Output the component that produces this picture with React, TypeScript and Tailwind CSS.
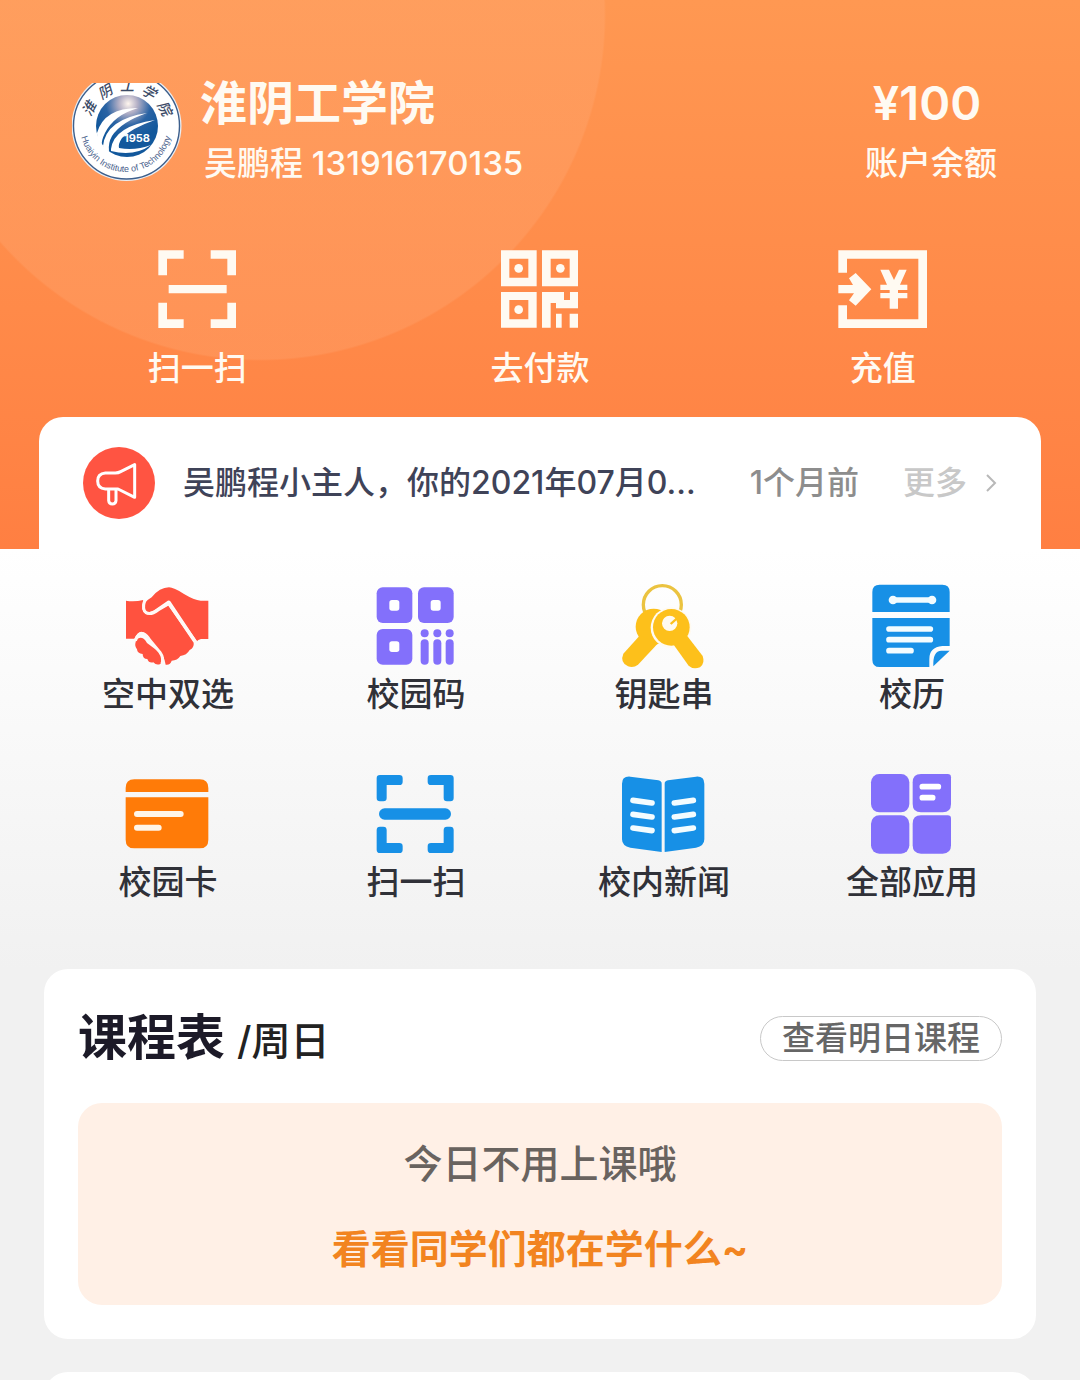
import type { ReactNode } from "react";

function SchoolLogo() {
  return (
    <svg viewBox="0 0 110 98" className="mt-1 h-[98px] w-[110px] shrink-0" role="img" aria-label="Huaiyin Institute of Technology">
      <defs>
        <radialGradient id="globe" cx="0.52" cy="0.14" r="0.6">
          <stop offset="0" stopColor="#fff6ee" />
          <stop offset="0.25" stopColor="#b4b0c6" />
          <stop offset="0.6" stopColor="#2a63a4" />
          <stop offset="1" stopColor="#12589c" />
        </radialGradient>
        <path id="ring-top" d="M18 43 A37 35 0 0 1 92 43" />
        <path id="ring-bottom" d="M8 43 A46 46 0 0 0 100 43" />
      </defs>
      <circle cx="54.500" cy="43" r="55" fill="#e9eef4" />
      <circle cx="54.500" cy="43" r="53" fill="#fff" stroke="#3d5f8c" strokeWidth="1.400" />
      <circle cx="55" cy="43" r="31" fill="url(#globe)" />
      <g fill="#fff">
        <path d="M25 50Q32 25 66 25Q42 32 33 50Q29 58 30 62Q25 58 25 50Z" />
        <path d="M31 63Q34 36 75 30Q49 39 40 53Q36 60 37 68Q33 68 31 63Z" />
        <path d="M39 66Q42 43 83 37Q60 45 50 55Q46 61 47 65Q63 68 79 62Q62 74 39 68Z" />
      </g>
      <text x="65" y="59" fill="#fff" fontSize="11" fontWeight="700" textAnchor="middle">1958</text>
      <text fill="#3b4a66" fontSize="14" fontStyle="italic" fontFamily="'Noto Sans CJK SC', sans-serif">
        <textPath href="#ring-top" startOffset="50%" textAnchor="middle">淮&#160;&#160;阴&#160;&#160;工&#160;&#160;学&#160;&#160;院</textPath>
      </text>
      <text fill="#4a628c" fontSize="9" fontFamily="'Liberation Sans', sans-serif">
        <textPath href="#ring-bottom" startOffset="50%" textAnchor="middle">Huaiyin Institute of Technology</textPath>
      </text>
    </svg>
  );
}

function ActionIcon({ viewBox, children }: { viewBox: string; children: ReactNode }) {
  return (
    <svg viewBox={viewBox} className="size-[90px] overflow-visible" fill="#fffaf2" aria-hidden="true">
      {children}
    </svg>
  );
}

function AppIcon({ viewBox, children }: { viewBox: string; children: ReactNode }) {
  return (
    <svg viewBox={viewBox} className="size-[84px] overflow-visible" aria-hidden="true">
      {children}
    </svg>
  );
}

const actions = [
  {
    label: "扫一扫",
    icon: (
      <ActionIcon viewBox="64 40 270 270">
        <path d="M83 59h76v25h-50v50H83zM240 59h76v75h-26V84h-50zM83 216h26v50h50v26H83zM290 216h26v76h-76v-26h50zM114 163h174v25H114z" />
      </ActionIcon>
    ),
  },
  {
    label: "去付款",
    icon: (
      <ActionIcon viewBox="1095 40 270 270">
        <path
          fillRule="evenodd"
          d="M1113 59h107v108h-107zM1138 84v57h57V84zM1236 59h108v108h-108zM1262 84v57h57V84zM1113 184h107v107h-107zM1138 208v58h57v-58z"
        />
        <circle cx="1166" cy="113" r="13" />
        <circle cx="1291" cy="113" r="13" />
        <circle cx="1166" cy="237" r="13" />
        <path d="M1236 184h66v24h18v-24h24v49h-66v-16h-16v74h-26zM1278 249h17v42h-17zM1319 249h25v42h-25z" />
      </ActionIcon>
    ),
  },
  {
    label: "充值",
    icon: (
      <ActionIcon viewBox="114 40 270 270">
        <path d="M115 59h266v233H115v-68h26v42h214V84H141v42h-26zM115 163h44l-12-20 20-16 47 49-47 49-20-16 15-21h-47z" />
        <path d="M241 117h26l15 31 15-31h23l-20 45h22v16h-28v9h28v16h-28v31h-25v-31h-28v-16h28v-9h-28v-16h20z" />
      </ActionIcon>
    ),
  },
];

const apps = [
  {
    label: "空中双选",
    icon: (
      <AppIcon viewBox="108 42 252 252">
        <g fill="#ff523f">
          <path d="M108 92q25 4 52-2-10 31 8 42 14 6 36-10l31-16 76 112q2 14-12 22-9 16-28 18-9 14-26 14-4 14-18 12-4-28-24-44l-34-46q-20-22-36 12H108z" />
          <path d="M163 116q-6-18 22-34 24-30 52-30 14 0 45 20 30 18 50 20h23v115h-22q-10 3-12 7L243 97q-4-10-14-2l-37 26q-22 13-29-5z" />
          <path d="M137 216q2-12 14-13 12 0 20 16l37 28q10 16 4 34-12 7-22-4-14 3-18-10-14 0-14-15-16-1-17-14-8-10-4-22z" />
        </g>
        <path d="M164 92q-8 27 4 36 15 8 36-8l32-19 82 116M136 212q10-25 24-21 10 4 19 19l31 37q12 17 6 34" fill="none" stroke="#fff8f5" strokeWidth="9" />
      </AppIcon>
    ),
  },
  {
    label: "校园码",
    icon: (
      <AppIcon viewBox="852 42 252 252">
        <g fill="#8370fb">
          <rect x="860" y="52" width="107" height="107" rx="18" />
          <rect x="984" y="52" width="107" height="107" rx="18" />
          <rect x="860" y="177" width="107" height="107" rx="18" />
          <circle cx="1004" cy="190" r="12" />
          <circle cx="1042" cy="190" r="12" />
          <circle cx="1079" cy="190" r="12" />
          <rect x="992" y="208" width="24" height="76" rx="12" />
          <rect x="1030" y="208" width="24" height="76" rx="12" />
          <rect x="1067" y="208" width="24" height="76" rx="12" />
        </g>
        <g fill="#fff">
          <rect x="898" y="90" width="30" height="32" rx="8" />
          <rect x="1022" y="90" width="30" height="32" rx="8" />
          <rect x="898" y="214" width="30" height="32" rx="8" />
        </g>
      </AppIcon>
    ),
  },
  {
    label: "钥匙串",
    icon: (
      <AppIcon viewBox="96 42 252 252">
        <circle cx="217" cy="104" r="57" fill="none" stroke="#ebc340" strokeWidth="10" />
        <g fill="#fdc01b">
          <circle cx="191" cy="170" r="54" />
          <path d="M150 196l52 26-58 62q-14 11-30 5-25-12-14-38z" />
        </g>
        <circle cx="243" cy="173" r="61" fill="#fffaf0" />
        <g fill="#fdc01b">
          <circle cx="244" cy="172" r="55" />
          <path d="M252 226l38-30 48 62q8 22-8 34-20 8-34-5z" />
        </g>
        <circle cx="239" cy="160" r="23" fill="#fffaf0" />
        <path d="M242 162l19-17" stroke="#fdc01b" strokeWidth="7" />
      </AppIcon>
    ),
  },
  {
    label: "校历",
    icon: (
      <AppIcon viewBox="840 42 252 252">
        <g fill="#1790e6">
          <path d="M847 126V66q0-22 22-22h188q22 0 22 22v60zM847 144h232v84h-22q-40 4-39 40v23H869q-22 0-22-22z" />
          <path d="M1030 289q-2-47 24-47h25z" />
        </g>
        <g stroke="#f3fcff" strokeLinecap="round" strokeWidth="17">
          <path d="M908 90h118" />
          <path d="M897 177h124M897 209h124M897 242h66" />
        </g>
        <circle cx="909" cy="90" r="13" fill="#f3fcff" />
        <circle cx="1026" cy="90" r="13" fill="#f3fcff" />
      </AppIcon>
    ),
  },
  {
    label: "校园卡",
    icon: (
      <AppIcon viewBox="108 51 252 252">
        <path fill="#ff7b08" d="M107 111V99q0-26 26-26h196q26 0 26 26v12zM107 127h248v127q0 26-26 26H133q-26 0-26-26z" />
        <path d="M141 177h131M141 218h65" stroke="#fff5e8" strokeWidth="18" strokeLinecap="round" />
      </AppIcon>
    ),
  },
  {
    label: "扫一扫",
    icon: (
      <AppIcon viewBox="852 51 252 252">
        <g fill="#1790e6">
          <path d="M870 60h58q10 0 10 10v10q0 10-10 10h-38v39q0 10-10 10h-10q-10 0-10-10V70q0-10 10-10z" />
          <path d="M1081 60h-58q-10 0-10 10v10q0 10 10 10h38v39q0 10 10 10h10q10 0 10-10V70q0-10-10-10z" />
          <path d="M870 294h58q10 0 10-10v-10q0-10-10-10h-38v-39q0-10-10-10h-10q-10 0-10 10v59q0 10 10 10z" />
          <path d="M1081 294h-58q-10 0-10-10v-10q0-10 10-10h38v-39q0-10 10-10h10q10 0 10 10v59q0 10-10 10z" />
          <rect x="867" y="160" width="216" height="34" rx="17" />
        </g>
      </AppIcon>
    ),
  },
  {
    label: "校内新闻",
    icon: (
      <AppIcon viewBox="96 51 252 252">
        <path
          fill="#1790e6"
          d="M96 86q0-23 25-21l84 11q10 2 10 10v205l-94-13q-25-5-25-25zM343 86q0-23-25-21l-84 11q-10 2-10 10v205l94-13q25-5 25-25z"
        />
        <path
          d="M129 136l57 8M129 178l57 8M129 219l57 8M253 144l57-8M253 186l57-8M253 227l57-8"
          stroke="#f3fcff"
          strokeWidth="17"
          strokeLinecap="round"
        />
      </AppIcon>
    ),
  },
  {
    label: "全部应用",
    icon: (
      <AppIcon viewBox="840 51 252 252">
        <g fill="#8370fb">
          <rect x="843" y="57" width="115" height="115" rx="25" />
          <path d="M993 57h80q10 0 10 10v80q0 25-25 25h-65q-25 0-25-25V82q0-25 25-25z" />
          <rect x="843" y="181" width="115" height="115" rx="25" />
          <path d="M993 181h80q10 0 10 10v80q0 25-25 25h-65q-25 0-25-25v-65q0-25 25-25z" />
        </g>
        <path d="M997 95h48M997 128h31" stroke="#fff" strokeWidth="17" strokeLinecap="round" />
      </AppIcon>
    ),
  },
];

export default function App() {
  return (
    <div className="flex min-h-screen flex-col bg-[#f1f1f1] font-['Inter','Noto_Sans_CJK_SC',sans-serif] font-medium">
      <header className="bg-[radial-gradient(circle_at_260px_15px,rgba(255,174,124,0.28)_344px,transparent_346px),linear-gradient(to_bottom,#ff9852,#ff7f42)] pt-[79px] text-[#fffaf2]">
        <div className="flex items-start justify-between pr-[83px] pl-[72px]">
          <div className="flex gap-[18px]">
            <SchoolLogo />
            <div>
              <h1 className="text-[47px] leading-12 font-bold">淮阴工学院</h1>
              <p className="mt-4 pl-1 text-[33px] leading-10">吴鹏程 131916170135</p>
            </div>
          </div>
          <div className="text-center">
            <p className="pr-2 text-[47px] leading-12 font-semibold">¥100</p>
            <p className="mt-4 text-[33px] leading-10">账户余额</p>
          </div>
        </div>

        <nav className="mt-[61px] grid grid-cols-3 px-[26px]">
          {actions.map((action) => (
            <button key={action.label} type="button" className="flex flex-col items-center gap-[14px]">
              {action.icon}
              <span className="text-[33px] leading-10">{action.label}</span>
            </button>
          ))}
        </nav>

        <div className="mx-[39px] mt-[29px] flex h-[132px] items-center rounded-t-3xl bg-white pr-11 pl-11">
          <svg viewBox="159 141 216 216" className="size-[72px] shrink-0" aria-hidden="true">
            <circle cx="267" cy="249" r="108" fill="#ff5442" />
            <g fill="none" stroke="#fff" strokeWidth="9" strokeLinejoin="round" strokeLinecap="round">
              <path d="M314 194v98l-50-25h-38q-23-2-23-24t23-24h30q9 0 16-4z" />
              <path d="M236 269v33q1 10 11 10t11-10v-33" />
            </g>
          </svg>
          <p className="ml-7 min-w-0 flex-1 truncate text-[32px] leading-10 text-[#3f4358]">吴鹏程小主人，你的2021年07月0...</p>
          <time className="ml-9 shrink-0 text-[32px] leading-10 text-[#8d8d8d]">1个月前</time>
          <a href="#notices" className="ml-11 flex shrink-0 items-center gap-[18px] text-[32px] leading-10 text-[#c8c8c8]">
            更多
            <svg viewBox="0 0 12 20" className="h-5 w-3" fill="none" stroke="#b8b8b8" strokeWidth="2" aria-hidden="true">
              <path d="M2 2l8 8-8 8" />
            </svg>
          </a>
        </div>
      </header>

      <section className="grid grid-cols-4 gap-y-[58px] bg-linear-to-b from-white to-[#f1f1f1] px-11 pt-[35px] pb-[67px]">
        {apps.map((app, index) => (
          <button key={index} type="button" className="flex flex-col items-center gap-[6px]">
            {app.icon}
            <span className="text-[33px] leading-10 whitespace-nowrap text-[#303138]">{app.label}</span>
          </button>
        ))}
      </section>

      <section className="mx-11 rounded-3xl bg-white px-[34px] pt-[41px] pb-[34px]">
        <div className="flex h-14 items-center justify-between">
          <h2 className="flex items-baseline gap-3 text-[49px] leading-14 font-bold text-[#1c1a28]">
            课程表
            <span className="text-[39px] leading-10 font-medium text-[#222]">/周日</span>
          </h2>
          <button type="button" className="rounded-full border border-[#c8c8c8] px-[21px] text-[33px] leading-[43px] text-[#666]">
            查看明日课程
          </button>
        </div>
        <div className="mt-[37px] flex flex-col items-center gap-[37px] rounded-3xl bg-[#fff0e6] pt-[37px] pb-8 text-[39px] leading-12">
          <p className="text-[#69635f]">今日不用上课哦</p>
          <a href="#classmates" className="font-bold text-[#f28420]">看看同学们都在学什么~</a>
        </div>
      </section>

      <section className="mx-11 mt-[33px] h-2 grow overflow-hidden">
        <div className="h-full min-h-12 rounded-t-3xl bg-white" />
      </section>
    </div>
  );
}
